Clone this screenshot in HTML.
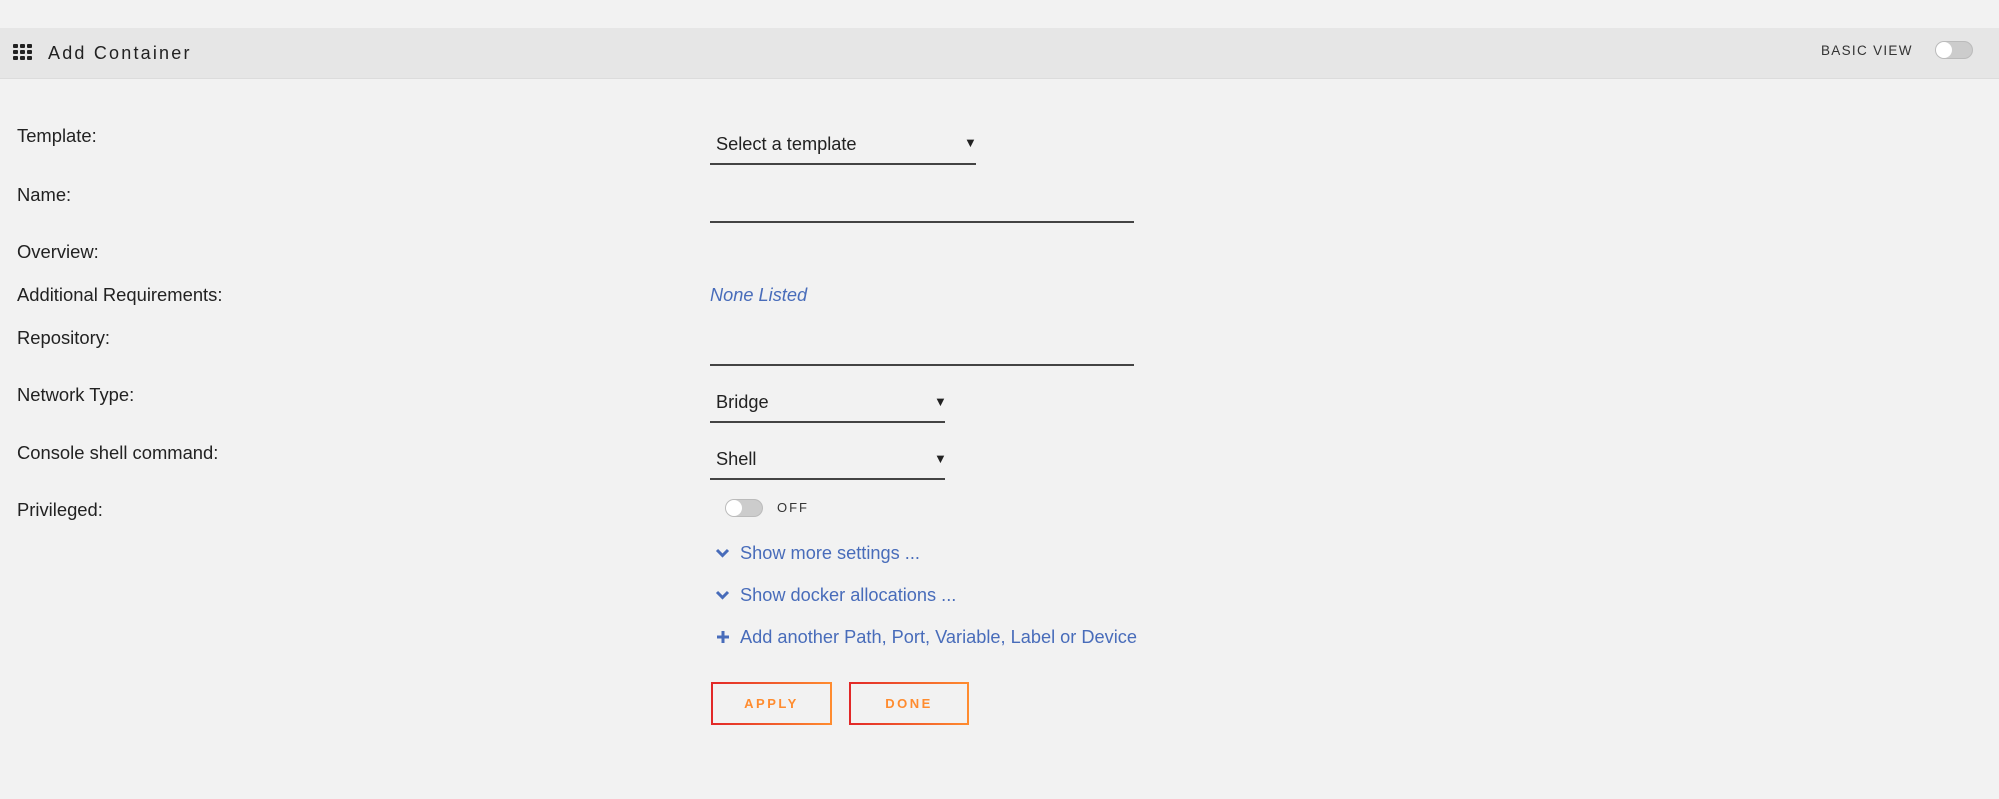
<!DOCTYPE html>
<html><head><meta charset="utf-8"><style>
*{margin:0;padding:0;box-sizing:border-box}
body{width:1999px;height:799px;background:#f2f2f2;font-family:"Liberation Sans",sans-serif;color:#222;position:relative;overflow:hidden}
.a{position:absolute;white-space:nowrap;line-height:20px}
.l{left:17px;font-size:18.4px}
.hdr{position:absolute;left:0;top:28px;width:1999px;height:51px;background:#e6e6e6;border-bottom:1px solid #dcdcdc}
.line{position:absolute;height:2px;background:#444}
.lk{color:#486cba;font-size:18.2px}
.btn{position:absolute;top:682px;height:43px;border:2px solid;border-image:linear-gradient(90deg,#e22828,#ff8c2f) 1;color:#ff8c2f;font-weight:bold;font-size:13px;letter-spacing:2.5px;text-align:center;line-height:39px}
.tog{position:absolute;width:38px;height:18px;border-radius:9px;background:#ccc;border:1px solid #bbb}
.tog::after{content:"";position:absolute;left:0;top:0;width:16px;height:16px;border-radius:8px;background:#fff}
</style></head><body>
<div class="hdr"></div>
<svg class="a" style="left:13px;top:44px" width="21" height="16" viewBox="0 0 21 16"><g fill="#222"><rect x="0" y="0" width="5" height="4" rx="1"/><rect x="7" y="0" width="5" height="4" rx="1"/><rect x="14" y="0" width="5" height="4" rx="1"/><rect x="0" y="6" width="5" height="4" rx="1"/><rect x="7" y="6" width="5" height="4" rx="1"/><rect x="14" y="6" width="5" height="4" rx="1"/><rect x="0" y="12" width="5" height="4" rx="1"/><rect x="7" y="12" width="5" height="4" rx="1"/><rect x="14" y="12" width="5" height="4" rx="1"/></g></svg>
<div class="a" style="left:48px;top:43px;font-size:18px;letter-spacing:2.2px;color:#222">Add Container</div>
<div class="a" style="left:1821px;top:41px;font-size:13.5px;letter-spacing:1.3px;color:#333">BASIC VIEW</div>
<div class="tog" style="left:1935px;top:41px"></div>

<div class="a l" style="top:126px">Template:</div>
<div class="a l" style="top:185px">Name:</div>
<div class="a l" style="top:242px">Overview:</div>
<div class="a l" style="top:285px">Additional Requirements:</div>
<div class="a l" style="top:328px">Repository:</div>
<div class="a l" style="top:385px">Network Type:</div>
<div class="a l" style="top:443px">Console shell command:</div>
<div class="a l" style="top:500px">Privileged:</div>

<div class="a" style="left:716px;top:134px;font-size:18.2px">Select a template</div>
<div class="a" style="left:964px;top:133px;font-size:13px">▼</div>
<div class="line" style="left:710px;top:163px;width:266px"></div>
<div class="line" style="left:710px;top:221px;width:424px"></div>
<div class="a" style="left:710px;top:285px;font-size:18.2px;font-style:italic;color:#486cba">None Listed</div>
<div class="line" style="left:710px;top:364px;width:424px"></div>
<div class="a" style="left:716px;top:392px;font-size:18.2px">Bridge</div>
<div class="a" style="left:934px;top:392px;font-size:13px">▼</div>
<div class="line" style="left:710px;top:421px;width:235px"></div>
<div class="a" style="left:716px;top:449px;font-size:18.2px">Shell</div>
<div class="a" style="left:934px;top:449px;font-size:13px">▼</div>
<div class="line" style="left:710px;top:478px;width:235px"></div>

<div class="tog" style="left:725px;top:499px"></div>
<div class="a" style="left:777px;top:498px;font-size:13px;letter-spacing:2px;color:#333">OFF</div>

<svg class="a" style="left:715px;top:548px" width="15" height="10" viewBox="0 0 15 10"><path d="M2 2l5.5 5.5L13 2" stroke="#486cba" stroke-width="3" fill="none"/></svg>
<div class="a lk" style="left:740px;top:543px">Show more settings ...</div>
<svg class="a" style="left:715px;top:590px" width="15" height="10" viewBox="0 0 15 10"><path d="M2 2l5.5 5.5L13 2" stroke="#486cba" stroke-width="3" fill="none"/></svg>
<div class="a lk" style="left:740px;top:585px">Show docker allocations ...</div>
<svg class="a" style="left:716px;top:630px" width="14" height="14" viewBox="0 0 14 14"><path d="M7 1v12M1 7h12" stroke="#486cba" stroke-width="3"/></svg>
<div class="a lk" style="left:740px;top:627px">Add another Path, Port, Variable, Label or Device</div>

<div class="btn" style="left:711px;width:121px">APPLY</div>
<div class="btn" style="left:849px;width:120px">DONE</div>
</body></html>
